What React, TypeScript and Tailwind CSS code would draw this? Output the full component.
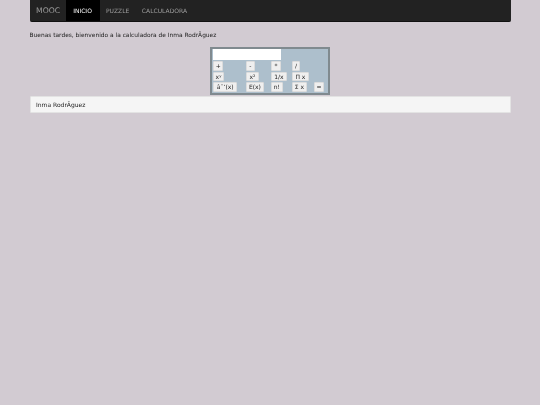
const font = "font-['DejaVu_Sans',sans-serif]";

function CalcButton({ label, className = "" }: { label: string; className?: string }) {
  return (
    <span
      className={`flex h-[9.8px] items-center justify-center rounded-[1px] border border-[#dcdcdc] bg-[#efefef] text-[6px] leading-none text-[#222] ${className}`}
    >
      {label}
    </span>
  );
}

const rows = [
  [
    { label: "+", w: "w-[10.5px]" },
    { label: "-", w: "w-[9.5px]" },
    { label: "*", w: "w-[10.5px]" },
    { label: "/", w: "w-[8.5px]" },
  ],
  [
    { label: "xʸ", w: "w-[11px]" },
    { label: "x²", w: "w-[13.5px]" },
    { label: "1/x", w: "w-[16.5px]" },
    { label: "Π x", w: "w-[17.5px]" },
  ],
  [
    { label: "âˆ‘(x)", w: "w-[24.5px]" },
    { label: "E(x)", w: "w-[18.5px]" },
    { label: "n!", w: "w-[12.5px]" },
    { label: "Σ x", w: "w-[15.5px]" },
  ],
];

export default function App() {
  return (
    <div className={`min-h-[405px] bg-[#d2cbd2] px-[29.5px] text-[5.9px] text-[#222] blur-[0.3px] ${font}`}>
      <nav className="flex h-[22px] items-stretch rounded-b-[2px] border-b border-[#111] bg-[#222]">
        <span className="flex w-[36.5px] items-center pl-[6.5px] text-[7.7px] text-[#9d9d9d]">MOOC</span>
        <span className="flex w-[34px] items-center justify-center pr-[1px] bg-black text-[6px] text-white">INICIO</span>
        <span className="flex items-center pl-[6px] pr-[6.3px] text-[6px] text-[#9d9d9d]">PUZZLE</span>
        <span className="flex items-center px-[6.3px] text-[6px] text-[#9d9d9d]">CALCULADORA</span>
      </nav>

      <p className="mt-[9.5px] h-[15.5px] leading-[7px]">Buenas tardes, bienvenido a la calculadora de Inma RodrÃ­guez</p>

      <div className="mx-auto h-[48px] w-[120px] border-2 border-[#808a8f] bg-[#adbfcc] pl-[0.7px]">
        <div className="h-[10.5px] w-[68.5px] bg-white" />
        <div className="mt-[1.7px] flex flex-col gap-[0.7px] pl-[0.3px]">
          {rows.map((row, i) => (
            <div key={i} className="grid h-[9.8px] grid-cols-[32.7px_25px_21px_22px_auto]">
              {row.map((b) => (
                <CalcButton key={b.label} label={b.label} className={b.w} />
              ))}
              {i === 2 && <CalcButton label="=" className="w-[10.5px]" />}
            </div>
          ))}
        </div>
      </div>

      <div className="mt-px flex h-[16.5px] items-center rounded-[1px] border border-[#e3e3e3] bg-[#f5f5f5] pl-[5.5px] text-[6px]">
        Inma RodrÃ­guez
      </div>
    </div>
  );
}
